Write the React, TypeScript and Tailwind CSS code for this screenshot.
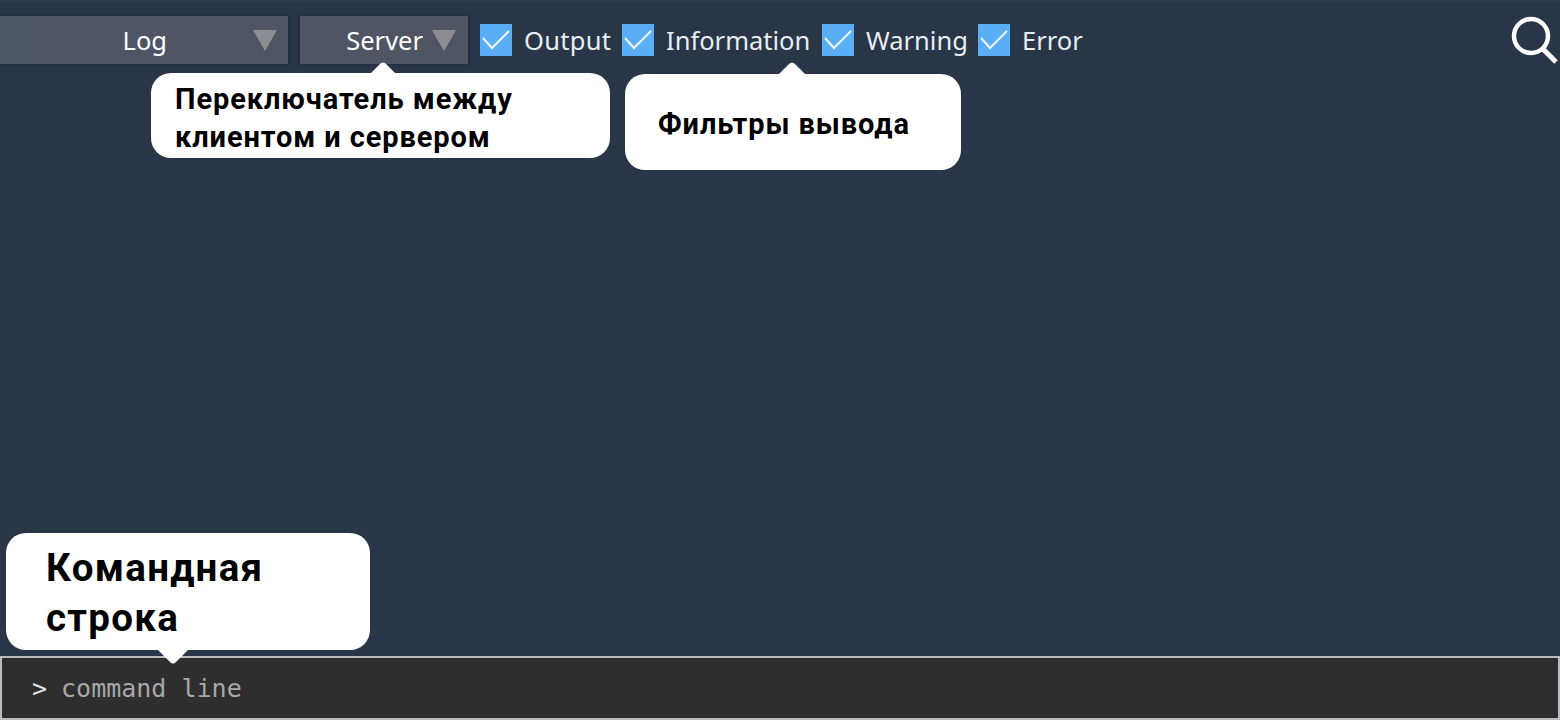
import type { JSX } from "react";

const filters = [
  { label: "Output", width: "w-[142px]", tracking: "tracking-[0.3px]" },
  { label: "Information", width: "w-[200px]", tracking: "" },
  { label: "Warning", width: "w-[156px]", tracking: "" },
  { label: "Error", width: "", tracking: "" },
];

function Triangle(): JSX.Element {
  return (
    <svg width="26" height="22" viewBox="0 0 26 22" className="shrink-0">
      <path d="M1 1H25L13 22Z" fill="#8c8e93" />
    </svg>
  );
}

function Check(): JSX.Element {
  return (
    <span className="flex h-[32px] w-[32px] shrink-0 items-center justify-center bg-[#5aaef5]">
      <svg width="32" height="32" viewBox="0 0 32 32" fill="none">
        <path d="M3 14L12 24L29 7" stroke="#f2f8fd" strokeWidth="2" />
      </svg>
    </span>
  );
}

function Callout({
  className,
  arrowClass,
  children,
}: {
  className: string;
  arrowClass: string;
  children: React.ReactNode;
}): JSX.Element {
  return (
    <div className={`absolute rounded-[20px] bg-white font-['Roboto',sans-serif] font-bold text-black ${className}`}>
      <svg width="32" height="16" viewBox="0 0 32 16" className={`absolute ${arrowClass}`}>
        <path d="M1 15L13 3Q16 0 19 3L31 15Z" fill="#fff" />
      </svg>
      {children}
    </div>
  );
}

export default function App(): JSX.Element {
  return (
    <div className="relative flex h-[720px] w-[1560px] flex-col overflow-hidden bg-[#293647] font-['Noto_Sans',sans-serif]">
      {/* Toolbar */}
      <div className="flex h-[656px] flex-col border-t-2 border-[#2f3c4e]">
        <div className="flex items-start pt-[14px] pr-[2px]">
          <div className="flex h-[48px] w-[288px] items-center justify-end bg-gradient-to-r from-[#4d5463] to-[#4f5563] pr-[10px] shadow-[0_0_3px_rgba(20,28,38,0.6)]">
            <span className="mr-[85px] pt-[2px] text-[25.5px] leading-none text-white">Log</span>
            <Triangle />
          </div>
          <div className="ml-[12px] flex h-[48px] w-[168px] items-center justify-end bg-[#4f5563] pr-[11px] shadow-[0_0_3px_rgba(20,28,38,0.6)]">
            <span className="mr-[8px] pt-[2px] text-[25.5px] leading-none text-white">Server</span>
            <Triangle />
          </div>
          <div className="ml-[12px] flex h-[48px] items-center">
            {filters.map((f) => (
              <div key={f.label} className={`flex items-center ${f.width}`}>
                <Check />
                <span className={`ml-[12px] pt-[2px] text-[25.5px] leading-none text-[#e8edf2] ${f.tracking}`}>{f.label}</span>
              </div>
            ))}
          </div>
          <svg width="48" height="50" viewBox="0 0 48 50" fill="none" className="ml-auto">
            <circle cx="21" cy="20" r="17" stroke="#fff" strokeWidth="4.5" />
            <path d="M33 33L46 46" stroke="#fff" strokeWidth="5" />
          </svg>
        </div>
      </div>

      {/* Command line */}
      <div className="flex h-[64px] items-center border-2 border-[#b9bcc0] bg-[#2e2e2e] pl-[30px]">
        <span className="font-['DejaVu_Sans_Mono',monospace] text-[25px] leading-none text-[#e4e4e4]">&gt;</span>
        <span className="ml-[14px] font-['DejaVu_Sans_Mono',monospace] text-[25px] leading-none text-[#a8a8a8]">command line</span>
      </div>

      {/* Callouts */}
      <Callout className="top-[73px] left-[151px] h-[85px] w-[459px] pt-[7px] pl-[24px] text-[29px] leading-[38px] tracking-[0.9px]" arrowClass="top-[-12px] left-[216px]">
        Переключатель между
        <br />
        клиентом и сервером
      </Callout>
      <Callout className="top-[74px] left-[625px] flex h-[96px] w-[336px] items-center pt-[5px] pl-[33px] text-[29px] tracking-[0.9px]" arrowClass="top-[-13px] left-[151px]">
        Фильтры вывода
      </Callout>
      <Callout className="top-[533px] left-[6px] h-[117px] w-[364px] pt-[10px] pl-[40px] text-[38.5px] leading-[50px] tracking-[1.3px]" arrowClass="top-[116px] left-[151px] rotate-180">
        Командная
        <br />
        строка
      </Callout>
    </div>
  );
}
